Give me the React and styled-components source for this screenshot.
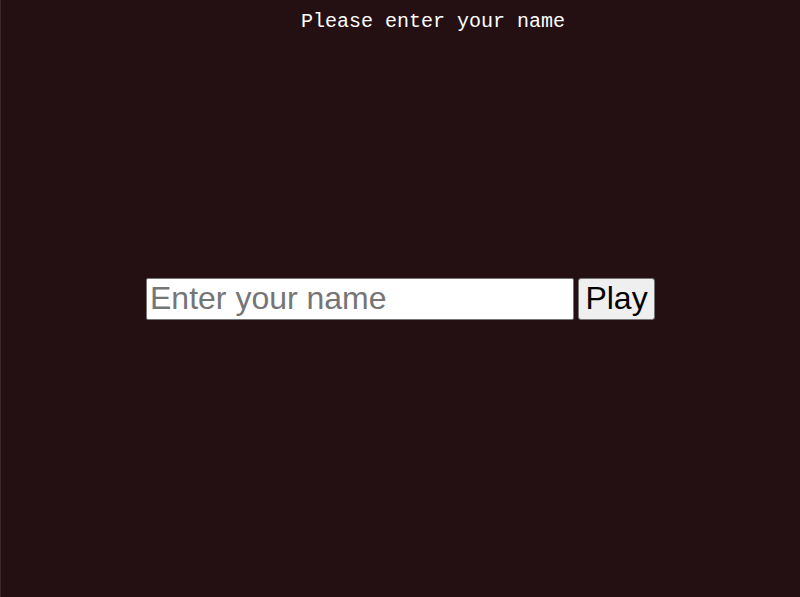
import React, { useState } from 'react';
import styled, { createGlobalStyle } from 'styled-components';

const GlobalStyle = createGlobalStyle`
	html, body {
		margin: 0;
		padding: 0;
		background-color: #241013;
	}
`;

const Screen = styled.div`
	height: 100vh;
	display: grid;
	grid-template-rows: 1fr auto 1fr;
	background-color: #241013;
	border-left: 1px solid #3b2a2c;
	box-sizing: border-box;
`;

const Prompt = styled.div`
	align-self: start;
	padding: 10px 0 0 300px;
	font-family: 'Liberation Mono', 'DejaVu Sans Mono', monospace;
	font-size: 20px;
	line-height: 23px;
	color: #ffffff;
	white-space: nowrap;
`;

const NameForm = styled.form`
	display: flex;
	justify-content: center;
	gap: 4px;
	margin: 0;
`;

const NameInput = styled.input`
	width: 428px;
	height: 42px;
	box-sizing: border-box;
	padding: 1px 3px;
	border: 1px solid #767676;
	border-radius: 2px;
	background-color: #ffffff;
	font-family: 'Liberation Sans', Arial, sans-serif;
	font-size: 32px;
	color: #000000;
	outline: none;
	&::placeholder {
		color: #757575;
	}
`;

const PlayButton = styled.button`
	width: 77px;
	height: 42px;
	box-sizing: border-box;
	padding: 0 6px;
	border: 1px solid #767676;
	border-radius: 3px;
	background-color: #efefef;
	font-family: 'Liberation Sans', Arial, sans-serif;
	font-size: 32px;
	color: #000000;
	cursor: pointer;
`;

export default function App() {
	const [name, setName] = useState('');

	return (
		<>
			<GlobalStyle />
			<Screen>
				<Prompt>Please enter your name</Prompt>
				<NameForm onSubmit={(e) => e.preventDefault()}>
					<NameInput
						type="text"
						placeholder="Enter your name"
						value={name}
						onChange={(e) => setName(e.target.value)}
					/>
					<PlayButton type="submit">Play</PlayButton>
				</NameForm>
			</Screen>
		</>
	);
}
